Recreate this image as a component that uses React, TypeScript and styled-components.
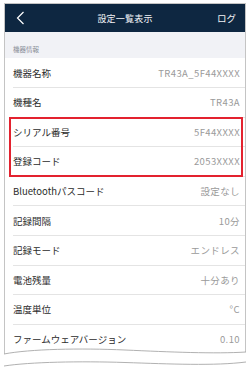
import { FunctionComponent } from 'react'
import styled, { createGlobalStyle } from 'styled-components'

const GlobalStyle = createGlobalStyle`
  html, body {
    margin: 0;
    padding: 0;
    background: #fff;
  }
  body {
    font-family: 'Noto Sans CJK JP', 'Noto Sans', sans-serif;
  }
`

const Screen = styled.div`
  position: relative;
  width: 250px;
  height: 374px;
  overflow: hidden;
  background: #fff;
  padding-top: 3px;
  box-sizing: border-box;
`

const Frame = styled.div`
  margin-left: 4px;
  width: 242px;
  border: 1px solid #c4c4c4;
  border-bottom: none;
  box-sizing: border-box;
  height: 380px;
`

const Header = styled.div`
  display: grid;
  grid-template-columns: 40px 1fr 40px;
  align-items: center;
  height: 28px;
  background: #0e2741;
  color: #fff;
`

const BackButton = styled.div`
  display: flex;
  align-items: center;
  padding-left: 11px;
`

const Title = styled.div`
  text-align: center;
  font-size: 9px;
  letter-spacing: 0.2px;
  color: #f2f4f7;
`

const LogLink = styled.div`
  text-align: right;
  padding-right: 9px;
  font-size: 9.5px;
  color: #f2f4f7;
`

const SectionHeader = styled.div`
  display: flex;
  align-items: flex-end;
  height: 26.4px;
  box-sizing: border-box;
  padding: 0 0 4px 8px;
  background: #f1f2f6;
  font-size: 6.5px;
  color: #8a8e96;
`

const Row = styled.div`
  display: flex;
  align-items: center;
  justify-content: space-between;
  height: 29.6px;
  box-sizing: border-box;
  margin-left: 8px;
  padding-right: 5px;
  border-bottom: 1px solid #e4e4e4;
`

const Label = styled.span`
  font-size: 9.5px;
  color: #2b2b2b;
`

const Value = styled.span`
  font-size: 9.5px;
  letter-spacing: 0.4px;
  color: #9a9a9a;
`

const Highlight = styled.div`
  position: relative;

  &::after {
    content: '';
    position: absolute;
    top: -1px;
    bottom: 0;
    left: 4px;
    right: 2px;
    border: 2px solid #e3222f;
    pointer-events: none;
  }
`

const TornEdge = styled.svg`
  position: absolute;
  left: 0;
  bottom: 0;
  display: block;
`

type Item = { label: string; value: string }

const items: Item[] = [
  { label: '機器名称', value: 'TR43A_5F44XXXX' },
  { label: '機種名', value: 'TR43A' },
  { label: 'シリアル番号', value: '5F44XXXX' },
  { label: '登録コード', value: '2053XXXX' },
  { label: 'Bluetoothパスコード', value: '設定なし' },
  { label: '記録間隔', value: '10分' },
  { label: '記録モード', value: 'エンドレス' },
  { label: '電池残量', value: '十分あり' },
  { label: '温度単位', value: '°C' },
  { label: 'ファームウェアバージョン', value: '0.10' }
]

const SettingRow: FunctionComponent<Item> = ({ label, value }) => (
  <Row>
    <Label>{label}</Label>
    <Value>{value}</Value>
  </Row>
)

const App: FunctionComponent = () => (
  <>
    <GlobalStyle />
    <Screen>
      <Frame>
        <Header>
          <BackButton>
            <svg width="9" height="14" viewBox="0 0 9 14">
              <polyline points="7.5,1 1.5,7 7.5,13" fill="none" stroke="#fff" strokeWidth="1.2" />
            </svg>
          </BackButton>
          <Title>設定一覧表示</Title>
          <LogLink>ログ</LogLink>
        </Header>
        <SectionHeader>機器情報</SectionHeader>
        {items.slice(0, 2).map((item) => (
          <SettingRow key={item.label} {...item} />
        ))}
        <Highlight>
          {items.slice(2, 4).map((item) => (
            <SettingRow key={item.label} {...item} />
          ))}
        </Highlight>
        {items.slice(4).map((item) => (
          <SettingRow key={item.label} {...item} />
        ))}
      </Frame>
      <TornEdge width="250" height="34" viewBox="0 0 250 34">
        <path d="M0 14 L4 14 C30 9 80 8 125 10 S215 14 246 12 L250 12 L250 34 L0 34 Z" fill="#fff" />
        <path d="M4 14 C30 9 80 8 125 10 S215 14 246 12" fill="none" stroke="#a8a8a8" strokeWidth="0.9" />
        <path d="M4 26 C30 22 80 21 125 22.5 S215 26 246 22" fill="none" stroke="#a8a8a8" strokeWidth="0.9" />
      </TornEdge>
    </Screen>
  </>
)

export default App
